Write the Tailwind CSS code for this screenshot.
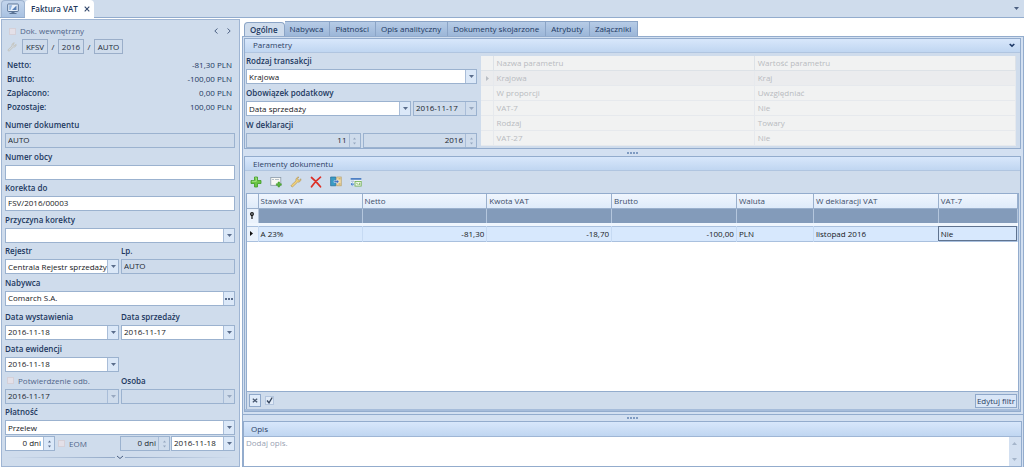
<!DOCTYPE html>
<html lang="pl">
<head>
<meta charset="utf-8">
<meta name="viewport" content="width=device-width, initial-scale=1">
<title>Faktura VAT</title>
<script src="https://cdn.jsdelivr.net/npm/@tailwindcss/browser@4"></script>
</head>
<body class="flex min-h-screen flex-col bg-white font-['Open_Sans','Noto_Sans',sans-serif] text-[8px] leading-[14px] text-[#2c4064]">

<!-- shared glyphs -->
<svg class="hidden" aria-hidden="true">
  <symbol id="down" viewBox="0 0 5 3"><path d="M0 0h5L2.500 3z" fill="currentColor"/></symbol>
  <symbol id="spin" viewBox="0 0 3 8"><path d="M0 2.500L1.500 .5 3 2.500zM0 5.500h3L1.500 7.500z" fill="currentColor"/></symbol>
  <symbol id="wrench" viewBox="0 0 12 12"><path d="M1.500 10.500a1 1 0 0 1 0-1.500L6 4.800C5.500 3 6.700 1 8.800 1L7.600 2.700l.4 1.200 1.300.3 1.600-1.400c.4 2.100-1.400 3.700-3.300 3.300L3 10.500a1 1 0 0 1-1.500 0z" fill="currentColor" stroke="#a88c52" stroke-width=".6"/></symbol>
</svg>

<header class="flex h-[18px] items-stretch border-b border-[#93accd] bg-[#cfdcec]">
  <button type="button" aria-label="Pulpit" class="ml-px flex w-6 items-center justify-center rounded-t-sm border border-b-0 border-[#9fb4d0] bg-linear-to-b from-[#c3d5ec] to-[#a9c2e2]">
    <svg class="h-3 w-3" viewBox="0 0 12 12"><rect x=".7" y="1" width="10.600" height="7.500" rx=".6" fill="#e8f0fa" stroke="#5b7496"/><path d="M2.200 2.300h3L3.500 7H2.200z" fill="#94b6e0"/><path d="M5 7l4.500-4.500V7z" fill="#577fb5"/><path d="M4.500 9h3v1h2v1h-7v-1h2z" fill="#5b7496"/></svg>
  </button>
  <div class="-mb-px flex items-center gap-[6px] rounded-t-sm bg-white pr-1 pb-px pl-[6px] text-[#22375c]">
    <a href="#faktura" class="font-semibold">Faktura VAT</a>
    <button type="button" aria-label="Zamknij"><svg class="h-[6px] w-[6px]" viewBox="0 0 6 6"><path d="M.7.7l4.600 4.600M5.300.7L.7 5.300" stroke="#33486c" stroke-width="1.100"/></svg></button>
  </div>
  <button type="button" aria-label="Lista kart" class="mr-[5px] ml-auto text-[#4b5f80]"><svg class="h-[3px] w-[5px]"><use href="#down"/></svg></button>
</header>

<main class="flex grow pt-px
  [&_.field]:flex [&_.field]:h-[15px] [&_.field]:min-w-0 [&_.field]:items-stretch [&_.field]:border [&_.field]:border-[#9bb2cf] [&_.field]:bg-white [&_.field]:text-[#16181c]
  [&_.field.off]:bg-[#cedbeb] [&_.field.off]:text-[#20262f]
  [&_.field>input]:w-full [&_.field>input]:min-w-0 [&_.field>input]:px-[2px] [&_.field>input]:pb-px [&_.field>input]:outline-none
  [&_.field>select]:w-full [&_.field>select]:min-w-0 [&_.field>select]:appearance-none [&_.field>select]:pl-[2px] [&_.field>select]:pb-px [&_.field>select]:opacity-100 [&_.field>select]:outline-none
  [&_.arrow]:flex [&_.arrow]:w-[11px] [&_.arrow]:shrink-0 [&_.arrow]:items-center [&_.arrow]:justify-center [&_.arrow]:border-l [&_.arrow]:border-[#a9bdd8] [&_.arrow]:bg-[#dbe8f8] [&_.arrow]:text-[#5a6d8c]
  [&_.off>.arrow]:bg-[#cfdcec] [&_.off>.arrow]:text-[#97a8c0]
  [&_.lbl]:block [&_.lbl]:font-semibold [&_.lbl]:whitespace-nowrap [&_.lbl]:text-[#213860]">

  <!-- invoice header form -->
  <form class="ml-px flex w-[239px] shrink-0 flex-col border border-[#9fb5d3] bg-[#cfdcec] pr-1 pl-[3px]">
    <div class="mt-[3px] flex h-4 items-center pr-1 pl-1 text-[#4f658a]">
      <label class="flex items-center gap-1"><input type="checkbox" disabled class="h-[7px] w-[7px] appearance-none border border-[#d5d0d8] bg-[#e3e0e8]">Dok. wewnętrzny</label>
      <button type="button" aria-label="Poprzedni" class="ml-auto"><svg class="h-[6px] w-[4px]" viewBox="0 0 4 6"><path d="M3.500.5L.8 3l2.700 2.500" fill="none" stroke="#41567a" stroke-width=".9"/></svg></button>
      <button type="button" aria-label="Następny" class="ml-[9px]"><svg class="h-[6px] w-[4px]" viewBox="0 0 4 6"><path d="M.5.5L3.200 3 .5 5.500" fill="none" stroke="#41567a" stroke-width=".9"/></svg></button>
    </div>
    <div class="flex h-[15px] items-center text-[#222b3a]">
      <svg class="ml-[2px] h-[10px] w-[10px] text-[#d0d3d6] opacity-50"><use href="#wrench"/></svg>
      <button type="button" class="ml-[5px] h-[15px] w-[26px] border border-[#9aaec9] leading-[13px]">KFSV</button>
      <span class="w-[10px] text-center">/</span>
      <button type="button" class="h-[15px] w-[26px] border border-[#9aaec9] leading-[13px]">2016</button>
      <span class="w-[10px] text-center">/</span>
      <button type="button" class="h-[15px] w-[29px] border border-[#9aaec9] leading-[13px]">AUTO</button>
    </div>
    <dl class="mt-1 grid grid-cols-2 pr-[3px] pl-[2px] leading-[14px] text-[#213860] [&>dd]:text-right [&>dt]:font-semibold">
      <dt>Netto:</dt><dd>-81,30 PLN</dd>
      <dt>Brutto:</dt><dd>-100,00 PLN</dd>
      <dt>Zapłacono:</dt><dd>0,00 PLN</dd>
      <dt>Pozostaje:</dt><dd>100,00 PLN</dd>
    </dl>

    <label class="lbl mt-[3px] h-4 leading-4" for="nrd">Numer dokumentu</label>
    <div class="field off"><input id="nrd" value="AUTO" readonly></div>
    <label class="lbl h-[17px] leading-[17px]" for="nro">Numer obcy</label>
    <div class="field"><input id="nro"></div>
    <label class="lbl h-4 leading-4" for="kor">Korekta do</label>
    <div class="field"><input id="kor" value="FSV/2016/00003"></div>
    <label class="lbl h-[17px] leading-[17px]" for="prz">Przyczyna korekty</label>
    <div class="field"><select id="prz"><option></option></select><span class="arrow"><svg class="h-[3px] w-[5px]"><use href="#down"/></svg></span></div>

    <div class="grid grid-cols-2 gap-x-[2px]">
      <div>
        <label class="lbl h-4 leading-4" for="rej">Rejestr</label>
        <div class="field"><select id="rej"><option>Centrala Rejestr sprzedaży</option></select><span class="arrow"><svg class="h-[3px] w-[5px]"><use href="#down"/></svg></span></div>
      </div>
      <div>
        <label class="lbl h-4 leading-4" for="lp">Lp.</label>
        <div class="field off"><input id="lp" value="AUTO" readonly></div>
      </div>
    </div>

    <label class="lbl h-[17px] leading-[17px]" for="nab">Nabywca</label>
    <div class="field"><input id="nab" value="Comarch S.A."><button type="button" aria-label="Wybierz nabywcę" class="arrow"><svg class="h-[2px] w-[8px]" viewBox="0 0 8 2"><path d="M0 0h2v2H0zM3 0h2v2H3zM6 0h2v2H6z" fill="currentColor"/></svg></button></div>

    <div class="mt-[3px] grid grid-cols-2 gap-x-[2px]">
      <div>
        <label class="lbl h-4 leading-4" for="dw">Data wystawienia</label>
        <div class="field"><input id="dw" value="2016-11-18"><button type="button" aria-label="Kalendarz" class="arrow"><svg class="h-[3px] w-[5px]"><use href="#down"/></svg></button></div>
      </div>
      <div>
        <label class="lbl h-4 leading-4" for="ds">Data sprzedaży</label>
        <div class="field"><input id="ds" value="2016-11-17"><button type="button" aria-label="Kalendarz" class="arrow"><svg class="h-[3px] w-[5px]"><use href="#down"/></svg></button></div>
      </div>
      <div>
        <label class="lbl h-[17px] leading-[17px]" for="de">Data ewidencji</label>
        <div class="field"><input id="de" value="2016-11-18"><button type="button" aria-label="Kalendarz" class="arrow"><svg class="h-[3px] w-[5px]"><use href="#down"/></svg></button></div>
      </div>
      <div></div>
      <div>
        <label class="flex h-[17px] items-center gap-1 pl-[2px] text-[#4f658a]"><input type="checkbox" disabled class="h-[7px] w-[7px] appearance-none border border-[#d5d0d8] bg-[#e3e0e8]">Potwierdzenie odb.</label>
        <div class="field off"><input aria-label="Data potwierdzenia" value="2016-11-17" disabled><button type="button" disabled aria-label="Kalendarz" class="arrow"><svg class="h-[3px] w-[5px]"><use href="#down"/></svg></button></div>
      </div>
      <div>
        <label class="lbl h-[17px] leading-[17px]" for="os">Osoba</label>
        <div class="field off"><select id="os" disabled><option></option></select><span class="arrow"><svg class="h-[3px] w-[5px]"><use href="#down"/></svg></span></div>
      </div>
    </div>

    <label class="lbl h-4 leading-4" for="pl">Płatność</label>
    <div class="field"><select id="pl"><option>Przelew</option></select><span class="arrow"><svg class="h-[3px] w-[5px]"><use href="#down"/></svg></span></div>
    <div class="mt-px flex">
      <div class="field w-[50px]"><input aria-label="Termin" class="text-right" value="0 dni"><button type="button" aria-label="Zmień termin" class="arrow"><svg class="h-2 w-[3px]"><use href="#spin"/></svg></button></div>
      <label class="ml-[3px] flex items-center gap-1 text-[#4f658a]"><input type="checkbox" disabled class="h-[7px] w-[7px] appearance-none border border-[#d5d0d8] bg-[#e3e0e8]">EOM</label>
      <div class="field off ml-auto w-[50px]"><input aria-label="Dni" class="text-right" value="0 dni" disabled><button type="button" disabled aria-label="Zmień dni" class="arrow"><svg class="h-2 w-[3px]"><use href="#spin"/></svg></button></div>
      <div class="field ml-px w-[64px]"><input aria-label="Termin płatności" value="2016-11-18"><button type="button" aria-label="Kalendarz" class="arrow"><svg class="h-[3px] w-[5px]"><use href="#down"/></svg></button></div>
    </div>
    <div class="mt-1 flex items-center gap-px">
      <div class="h-px grow bg-linear-to-r from-transparent to-[#93a9c7]"></div>
      <button type="button" aria-label="Rozwiń" class="flex"><svg class="h-[5px] w-[8px]" viewBox="0 0 8 5"><path d="M1 1l3 2.500L7 1" fill="none" stroke="#4a5f82"/></svg></button>
      <div class="h-px grow bg-linear-to-l from-transparent to-[#93a9c7]"></div>
    </div>
  </form>

  <!-- document tabs and their content -->
  <section class="ml-[2px] flex min-w-0 grow flex-col">
    <nav class="ml-[2px] flex h-[17px] items-end text-[#213860] [&>a]:h-[15px] [&>a]:border-t [&>a]:border-r [&>a]:border-[#8ba4c6] [&>a]:pr-[6px] [&>a]:pl-[5px] [&>a]:leading-[14px] [&>a]:whitespace-nowrap">
      <a href="#ogolne" class="-mb-px rounded-t-sm border-l bg-[#cfdcec] font-semibold">Ogólne</a>
      <a href="#nabywca" class="bg-linear-to-b from-[#b6cbe6] to-[#9cb6d8]">Nabywca</a>
      <a href="#platnosci" class="bg-linear-to-b from-[#b6cbe6] to-[#9cb6d8]">Płatności</a>
      <a href="#opis" class="bg-linear-to-b from-[#b6cbe6] to-[#9cb6d8]">Opis analityczny</a>
      <a href="#dokumenty" class="bg-linear-to-b from-[#b6cbe6] to-[#9cb6d8]">Dokumenty skojarzone</a>
      <a href="#atrybuty" class="bg-linear-to-b from-[#b6cbe6] to-[#9cb6d8]">Atrybuty</a>
      <a href="#zalaczniki" class="bg-linear-to-b from-[#b6cbe6] to-[#9cb6d8]">Załączniki</a>
    </nav>

    <div class="flex grow flex-col border border-b-0 border-[#93accd] bg-[#d3e0f1] pt-px">
      <section class="ml-px mr-[2px] border border-[#93accd] bg-[#cfdcec]">
        <div class="flex h-[14px] items-center border-b border-[#b0c5e0] bg-linear-to-b from-[#d8e7fb] to-[#c0d6f1] pr-[5px] pb-px pl-2">
          <h2>Parametry</h2>
          <button type="button" aria-label="Zwiń" class="ml-auto"><svg class="h-[5px] w-[6px]" viewBox="0 0 6 5"><path d="M.7 1L3 3.200 5.300 1" fill="none" stroke="#1e3a68" stroke-width="1.600"/></svg></button>
        </div>
        <div class="flex gap-[4px] pr-1">
          <form class="w-[232px] shrink-0 pl-px">
            <label class="lbl h-4 leading-4" for="rt">Rodzaj transakcji</label>
            <div class="field"><select id="rt"><option>Krajowa</option></select><span class="arrow"><svg class="h-[3px] w-[5px]"><use href="#down"/></svg></span></div>
            <label class="lbl h-[17px] leading-[17px]" for="op">Obowiązek podatkowy</label>
            <div class="flex gap-[2px]">
              <div class="field grow"><select id="op"><option>Data sprzedaży</option></select><span class="arrow"><svg class="h-[3px] w-[5px]"><use href="#down"/></svg></span></div>
              <div class="field off w-[64px]"><input aria-label="Data obowiązku" value="2016-11-17" disabled><button type="button" disabled aria-label="Kalendarz" class="arrow"><svg class="h-[3px] w-[5px]"><use href="#down"/></svg></button></div>
            </div>
            <label class="lbl h-[17px] leading-[17px]" for="wd">W deklaracji</label>
            <div class="grid grid-cols-2 gap-[2px]">
              <div class="field off"><input id="wd" class="text-right" value="11" disabled><button type="button" disabled aria-label="Zmień miesiąc" class="arrow"><svg class="h-2 w-[3px]"><use href="#spin"/></svg></button></div>
              <div class="field off"><input aria-label="Rok" class="text-right" value="2016" disabled><button type="button" disabled aria-label="Zmień rok" class="arrow"><svg class="h-2 w-[3px]"><use href="#spin"/></svg></button></div>
            </div>
          </form>
          <table class="mt-[3px] w-full table-fixed self-start border-collapse bg-[#f1f2f2] text-left text-[#b8bbc0] [&_td]:border-r [&_td]:border-b [&_td]:border-[#e6e9ed] [&_td]:px-[3px] [&_td]:leading-[14px] [&_th]:border-r [&_th]:border-b [&_th]:border-[#dde2e7] [&_th]:px-[3px] [&_th]:font-normal">
            <colgroup><col class="w-3"><col><col></colgroup>
            <thead><tr><th></th><th>Nazwa parametru</th><th>Wartość parametru</th></tr></thead>
            <tbody>
              <tr class="bg-[#ebecee]"><td><svg class="ml-[2px] h-[5px] w-[3px]" viewBox="0 0 3 5"><path d="M0 0l3 2.500L0 5z" fill="#b9bdc3"/></svg></td><td>Krajowa</td><td>Kraj</td></tr>
              <tr><td></td><td>W proporcji</td><td>Uwzględniać</td></tr>
              <tr><td></td><td>VAT-7</td><td>Nie</td></tr>
              <tr><td></td><td>Rodzaj</td><td>Towary</td></tr>
              <tr><td></td><td>VAT-27</td><td>Nie</td></tr>
            </tbody>
          </table>
        </div>
      </section>

      <div class="flex h-[7px] items-center justify-center gap-px"><i class="h-[2px] w-[2px] bg-[#7f9bc2]"></i><i class="h-[2px] w-[2px] bg-[#7f9bc2]"></i><i class="h-[2px] w-[2px] bg-[#7f9bc2]"></i><i class="h-[2px] w-[2px] bg-[#7f9bc2]"></i></div>

      <section class="ml-px mr-[2px] flex grow flex-col border border-[#93accd] bg-[#cfdcec]">
        <div class="h-[14px] border-b border-[#b0c5e0] bg-linear-to-b from-[#d8e7fb] to-[#c0d6f1] pl-2 leading-[13px]"><h2>Elementy dokumentu</h2></div>
        <div class="flex h-[22px] items-center gap-2 pl-[5px] [&_svg]:h-[12px] [&_svg]:w-[12px]">
          <button type="button" aria-label="Dodaj"><svg viewBox="0 0 12 12"><path d="M4.500 1h3v3.500H11v3H7.500V11h-3V7.500H1v-3h3.500z" fill="#6cc644" stroke="#3f9a26" stroke-width=".8"/><path d="M5.300 1.800h1V5.300H1.800" fill="none" stroke="#b4ea95" stroke-width=".8"/></svg></button>
          <button type="button" aria-label="Dodaj pozycję"><svg viewBox="0 0 12 12"><rect x=".8" y="1.500" width="10" height="7.800" fill="#f8f8f4" stroke="#8b9aa8" stroke-width=".8"/><path d="M2 3.500h2M5 3.500h4" stroke="#a5b2bf" stroke-width=".8"/><path d="M8 6h1.600v1.700h1.700v1.600H9.600V11H8V9.300H6.300V7.700H8z" fill="#5bb93a" stroke="#388c22" stroke-width=".5"/></svg></button>
          <button type="button" aria-label="Edytuj" class="text-[#f2d27a]"><svg><use href="#wrench"/></svg></button>
          <button type="button" aria-label="Usuń"><svg viewBox="0 0 12 12"><path d="M1.500 1.500C4 3.500 8 7.500 10.500 10.800M10.500 1.200C7.500 3.500 4 7 1.500 10.800" fill="none" stroke="#dc3027" stroke-width="1.700" stroke-linecap="round"/></svg></button>
          <button type="button" aria-label="Księguj"><svg viewBox="0 0 12 12"><path d="M.6 1h5.200v8.800H.6z" fill="#3a9bc4" stroke="#276f98" stroke-width=".7"/><rect x="6.800" y="1" width="4.400" height="8.800" fill="#f1dba6" stroke="#b39b64" stroke-width=".7"/><path d="M8.500 2.800h2M8.500 8h2" stroke="#b08f48" stroke-width=".8"/><path d="M4 4.700h2.800V3.400l2.400 2.200-2.400 2.200V6.500H4z" fill="#3c6cc0" stroke="#e9f2fb" stroke-width=".5"/></svg></button>
          <button type="button" aria-label="Przelicz"><svg viewBox="0 0 12 12"><path d="M.6 2h10.800v5H.6z" fill="#eef4fb"/><path d="M.6 2h10.800v1.800H.6z" fill="#4f80c4"/><path d="M1 5.200h3" stroke="#8aa5c8" stroke-width=".8"/><path d="M4 8.200H1M1 8.200l1.500-1.400M1 8.200l1.500 1.400" stroke="#3b7bd0" stroke-width=".9"/><rect x="5" y="5.500" width="6.200" height="4.600" fill="#edf6e8" stroke="#6fae4e" stroke-width=".8"/><path d="M6.300 6.800l2 2M9.700 6.800v2.200" stroke="#5da23c" stroke-width=".8"/></svg></button>
        </div>

        <div class="mx-px flex grow flex-col border-x border-t border-[#93accd] bg-white">
          <table class="w-full table-fixed border-collapse text-left text-[#16181c] [&_td]:px-[2px] [&_th]:px-[2px]">
            <colgroup><col class="w-[11px]"><col class="w-[13.500%]"><col class="w-[16.200%]"><col class="w-[16.200%]"><col class="w-[16.200%]"><col class="w-[10%]"><col class="w-[16.200%]"><col></colgroup>
            <thead><tr class="h-[14px] bg-linear-to-b from-[#f0f6fe] to-[#dfebfa] leading-[12px] text-[#3d4d69] [&>th]:border-r [&>th]:border-b [&>th]:border-[#9ab0cd] [&>th]:font-normal"><th></th><th>Stawka VAT</th><th>Netto</th><th>Kwota VAT</th><th>Brutto</th><th>Waluta</th><th>W deklaracji VAT</th><th>VAT-7</th></tr></thead>
            <tbody>
              <tr class="h-[15px] bg-[#839bba] leading-3 [&>td]:border-r [&>td]:border-[#b4c6dd]"><td class="bg-[#eaf2fc]"><svg class="ml-px h-[7px] w-[4px]" viewBox="0 0 4 7"><circle cx="2" cy="2" r="1.300" fill="none" stroke="#111" stroke-width="1.300"/><path d="M2 3v4" stroke="#111" stroke-width="1.200"/></svg></td><td></td><td></td><td></td><td></td><td></td><td></td><td></td></tr>
              <tr class="h-[3px] bg-[#eff6fe]"><td colspan="8"></td></tr>
              <tr class="h-[15px] border-t border-b border-[#a9c0de] bg-[#d7e8fd] leading-[14px] [&>td]:border-r [&>td]:border-[#c6daf3]"><td class="bg-[#eaf2fc]"><svg class="ml-px h-[5px] w-[3px]" viewBox="0 0 3 5"><path d="M0 0l3 2.500L0 5z" fill="#111"/></svg></td><td>A 23%</td><td class="text-right">-81,30</td><td class="text-right">-18,70</td><td class="text-right">-100,00</td><td>PLN</td><td>listopad 2016</td><td class="outline outline-[#5f7390] -outline-offset-1">Nie</td></tr>
            </tbody>
          </table>
        </div>
        <div class="mx-px flex h-[18px] items-center gap-1 border-x border-t border-[#93accd] pl-[2px]">
          <button type="button" aria-label="Wyczyść filtr" class="flex h-[13px] w-[12px] items-center justify-center border border-[#8fa8ca] bg-[#dfebfa]"><svg class="h-[5px] w-[6px]" viewBox="0 0 6 5"><path d="M.8.700L5.200 4.300M5.200.7L.8 4.300" stroke="#44546d" stroke-width="1.200"/></svg></button>
          <label class="relative flex" aria-label="Filtr aktywny"><input type="checkbox" checked class="h-[9px] w-[9px] appearance-none border border-[#b3c5de] bg-[#e0eaf7]"><svg class="pointer-events-none absolute inset-0 h-[9px] w-[9px]" viewBox="0 0 9 9"><path d="M2 4.500l2 2.300L7.200 1.500" fill="none" stroke="#33435c" stroke-width="1.300"/></svg></label>
          <button type="button" class="mr-px ml-auto h-[14px] border border-[#8fa8ca] bg-[#d9e6f7] px-px leading-3">Edytuj filtr</button>
        </div>
        <div class="h-[2px] bg-[#a6bcda]"></div>
      </section>
      <div class="mt-[2px] h-px bg-[#93accd]"></div>

      <div class="flex h-[6px] items-center justify-center gap-px"><i class="h-[2px] w-[2px] bg-[#7f9bc2]"></i><i class="h-[2px] w-[2px] bg-[#7f9bc2]"></i><i class="h-[2px] w-[2px] bg-[#7f9bc2]"></i><i class="h-[2px] w-[2px] bg-[#7f9bc2]"></i></div>

      <section class="mr-px border border-[#93accd]">
        <label for="opisTxt" class="block h-[15px] border-b border-[#9fb6d5] bg-linear-to-b from-[#d8e7fb] to-[#c0d6f1] pl-[7px] leading-[13px]">Opis</label>
        <div class="flex h-[29px] bg-white">
          <textarea id="opisTxt" placeholder="Dodaj opis." class="grow resize-none px-[2px] leading-[11px] outline-none placeholder:text-[#98a2b3]"></textarea>
          <div class="flex w-3 flex-col items-center justify-between bg-[#d3e0f1] py-[5px] text-[#a5b5cb]"><svg class="h-[3px] w-[5px] rotate-180"><use href="#down"/></svg><svg class="h-[3px] w-[5px]"><use href="#down"/></svg></div>
        </div>
      </section>
    </div>
  </section>
</main>
</body>
</html>
